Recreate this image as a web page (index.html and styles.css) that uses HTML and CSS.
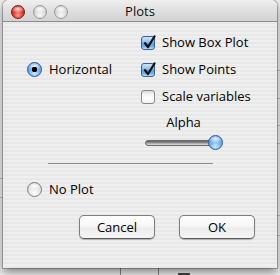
FILE: index.html
```html
<!DOCTYPE html>
<html>
<head>
<meta charset="utf-8">
<link rel="stylesheet" href="styles.css">
</head>
<body>
<div class="desk">
  <div class="window">
    <div class="titlebar">
      <div class="lights">
        <span class="light red"></span>
        <span class="light grey"></span>
        <span class="light grey"></span>
      </div>
      <div class="title">Plots</div>
      <div></div>
    </div>
    <div class="content">
      <div class="options">
        <label class="radio-row horiz"><span class="radio on"></span>Horizontal</label>
        <label class="check-row r1"><span class="checkbox on"><svg viewBox="0 0 14 14" width="14" height="14"><path d="M3 7.2 L6 11 L12.5 0.5" fill="none" stroke="#111" stroke-width="2.3" stroke-linecap="round" stroke-linejoin="round"/></svg></span>Show Box Plot</label>
        <label class="check-row r2"><span class="checkbox on"><svg viewBox="0 0 14 14" width="14" height="14"><path d="M3 7.2 L6 11 L12.5 0.5" fill="none" stroke="#111" stroke-width="2.3" stroke-linecap="round" stroke-linejoin="round"/></svg></span>Show Points</label>
        <label class="check-row r3"><span class="checkbox"></span>Scale variables</label>
        <div class="alpha">
          <div class="alpha-label">Alpha</div>
          <div class="slider"><div class="track"></div><div class="knob"></div></div>
        </div>
      </div>
      <div class="sep"></div>
      <label class="radio-row noplot"><span class="radio"></span>No Plot</label>
      <div class="buttons">
        <button class="btn">Cancel</button>
        <button class="btn">OK</button>
      </div>
    </div>
  </div>
</div>
</body>
</html>
```
FILE: styles.css
```css
* { box-sizing: border-box; }
html, body { margin: 0; padding: 0; }
body {
  width: 280px;
  height: 275px;
  overflow: hidden;
  font-family: "Open Sans", "DejaVu Sans", sans-serif;
  font-size: 13px;
  color: #000;
  background:
    linear-gradient(#bdbdbd, #bdbdbd) 0 178px / 3px 1px no-repeat,
    linear-gradient(#bdbdbd, #bdbdbd) 0 197px / 3px 1px no-repeat,
    linear-gradient(#bdbdbd, #bdbdbd) 277px 70px / 3px 1px no-repeat,
    linear-gradient(#bdbdbd, #bdbdbd) 277px 98px / 3px 1px no-repeat,
    linear-gradient(#bdbdbd, #bdbdbd) 277px 125px / 3px 1px no-repeat,
    linear-gradient(#bdbdbd, #bdbdbd) 277px 143px / 3px 1px no-repeat,
    linear-gradient(#bdbdbd, #bdbdbd) 277px 215px / 3px 1px no-repeat,
    linear-gradient(#bdbdbd, #bdbdbd) 277px 235px / 3px 1px no-repeat,
    linear-gradient(#888, #888) 120px 268px / 1px 7px no-repeat,
    linear-gradient(#888, #888) 158px 268px / 1px 7px no-repeat,
    linear-gradient(#444, #444) 178px 273px / 12px 2px no-repeat,
    #ececec;
}
.desk {
  padding: 0 3px;
}
.window {
  width: 274px;
  height: 268px;
  border-radius: 6px 6px 0 0;
  display: flex;
  flex-direction: column;
  background: repeating-linear-gradient(to bottom, #efefef 0 2px, #e8e8e8 2px 4px);
  box-shadow: 0 0 0 1px rgba(0,0,0,0.22), 0 4px 8px rgba(0,0,0,0.45);
  overflow: hidden;
}
.titlebar {
  height: 22px;
  display: grid;
  grid-template-columns: 1fr auto 1fr;
  background: linear-gradient(to bottom, #f0f0f0 0%, #e2e2e2 40%, #d2d2d2 100%);
  border-bottom: 1px solid #8f8f8f;
  border-radius: 6px 6px 0 0;
}
.lights {
  display: flex;
  gap: 7.5px;
  padding: 5px 0 0 8px;
}
.light {
  width: 14px;
  height: 14px;
  border-radius: 50%;
  display: block;
}
.light.red {
  background:
    radial-gradient(ellipse 60% 35% at 50% 25%, rgba(255,255,255,0.85), rgba(255,255,255,0) 100%),
    radial-gradient(circle at 50% 75%, #ff9a8c 0%, #e0362c 45%, #a50c08 100%);
  border: 1px solid #7a1a14;
}
.light.grey {
  background:
    radial-gradient(ellipse 60% 35% at 50% 25%, rgba(255,255,255,0.95), rgba(255,255,255,0) 100%),
    radial-gradient(circle at 50% 75%, #fafafa 0%, #d6d6d6 50%, #b4b4b4 100%);
  border: 1px solid #9a9a9a;
}
.title {
  padding-top: 1px;
  line-height: 21px;
  color: #111;
}
.content {
  flex: 1;
  display: flex;
  flex-direction: column;
}
.options {
  display: grid;
  grid-template-columns: 138px 1fr;
  grid-template-rows: 27px 27px 27px auto;
  padding-top: 7px;
}
.radio-row, .check-row {
  display: flex;
  align-items: center;
  line-height: 27px;
  white-space: nowrap;
}
.horiz {
  grid-column: 1;
  grid-row: 2;
  padding-left: 24px;
  gap: 7px;
}
.check-row { grid-column: 2; gap: 7px; }
.r1 { grid-row: 1; }
.r2 { grid-row: 2; }
.r3 { grid-row: 3; }
.checkbox {
  width: 14px;
  height: 14px;
  border-radius: 3px;
  display: block;
  flex: none;
  position: relative;
  border: 1px solid #8a8a8a;
  background: linear-gradient(to bottom, #d8d8d8 0%, #f6f6f6 30%, #ffffff 60%, #f0f0f0 100%);
}
.checkbox.on {
  border-color: #3e6194;
  background: linear-gradient(to bottom, #cfe6fc 0%, #8fc0f0 40%, #5a9ee8 52%, #6fb2f3 80%, #bde3fd 100%);
}
.checkbox svg {
  position: absolute;
  left: 0;
  top: -1px;
  overflow: visible;
}
.alpha {
  grid-column: 2;
  grid-row: 4;
  width: 78px;
  margin-left: 4px;
  padding-top: 4px;
}
.alpha-label {
  text-align: center;
  line-height: 16px;
  padding-right: 1px;
}
.slider {
  margin-top: 4px;
  height: 17px;
  display: flex;
  align-items: center;
}
.track {
  flex: 1;
  height: 6px;
  border-radius: 3px;
  background: linear-gradient(to bottom, #5e5e5e 0%, #8c8c8c 40%, #c4c4c4 80%, #dedede 100%);
  border: 1px solid #6d6d6d;
  margin-right: -6px;
}
.knob, .radio {
  width: 15px;
  height: 15px;
  border-radius: 50%;
  flex: none;
  display: block;
}
.knob {
  position: relative;
  border: 1px solid #3a5d93;
  background:
    radial-gradient(ellipse 60% 35% at 50% 22%, rgba(255,255,255,0.9), rgba(255,255,255,0) 100%),
    radial-gradient(circle at 50% 80%, #c8ecff 0%, #6eaef0 45%, #3d7fd6 100%);
}
.radio {
  border: 1px solid #7d7d7d;
  background:
    radial-gradient(ellipse 60% 35% at 50% 22%, rgba(255,255,255,1), rgba(255,255,255,0) 100%),
    radial-gradient(circle at 50% 80%, #ffffff 0%, #e4e4e4 50%, #b8b8b8 100%);
  position: relative;
}
.radio.on {
  border-color: #33578e;
  background:
    radial-gradient(circle at 50% 50%, #000 0 2.6px, rgba(0,0,0,0) 3px),
    radial-gradient(ellipse 60% 35% at 50% 22%, rgba(255,255,255,0.9), rgba(255,255,255,0) 100%),
    radial-gradient(circle at 50% 80%, #c8ecff 0%, #6eaef0 45%, #3d7fd6 100%);
}
.sep {
  margin: 12px 0 0 45px;
  width: 165px;
  height: 1px;
  background: #8e8e8e;
}
.noplot {
  margin-top: 16px;
  padding-left: 24px;
  gap: 7px;
  line-height: 18px;
}
.buttons {
  margin-top: 17px;
  display: flex;
  justify-content: flex-end;
  gap: 24px;
  padding-right: 22px;
}
.btn {
  width: 76px;
  height: 24px;
  padding: 0;
  font-family: "Open Sans", "DejaVu Sans", sans-serif;
  font-size: 13px;
  color: #000;
  line-height: 22px;
  border: 1px solid #7e7e7e;
  border-bottom-color: #5a5a5a;
  border-radius: 5px;
  background: linear-gradient(to bottom, #ffffff 0%, #f7f7f7 45%, #ececec 55%, #f6f6f6 100%);
  box-shadow: 0 1px 1px rgba(0,0,0,0.25);
}
```
